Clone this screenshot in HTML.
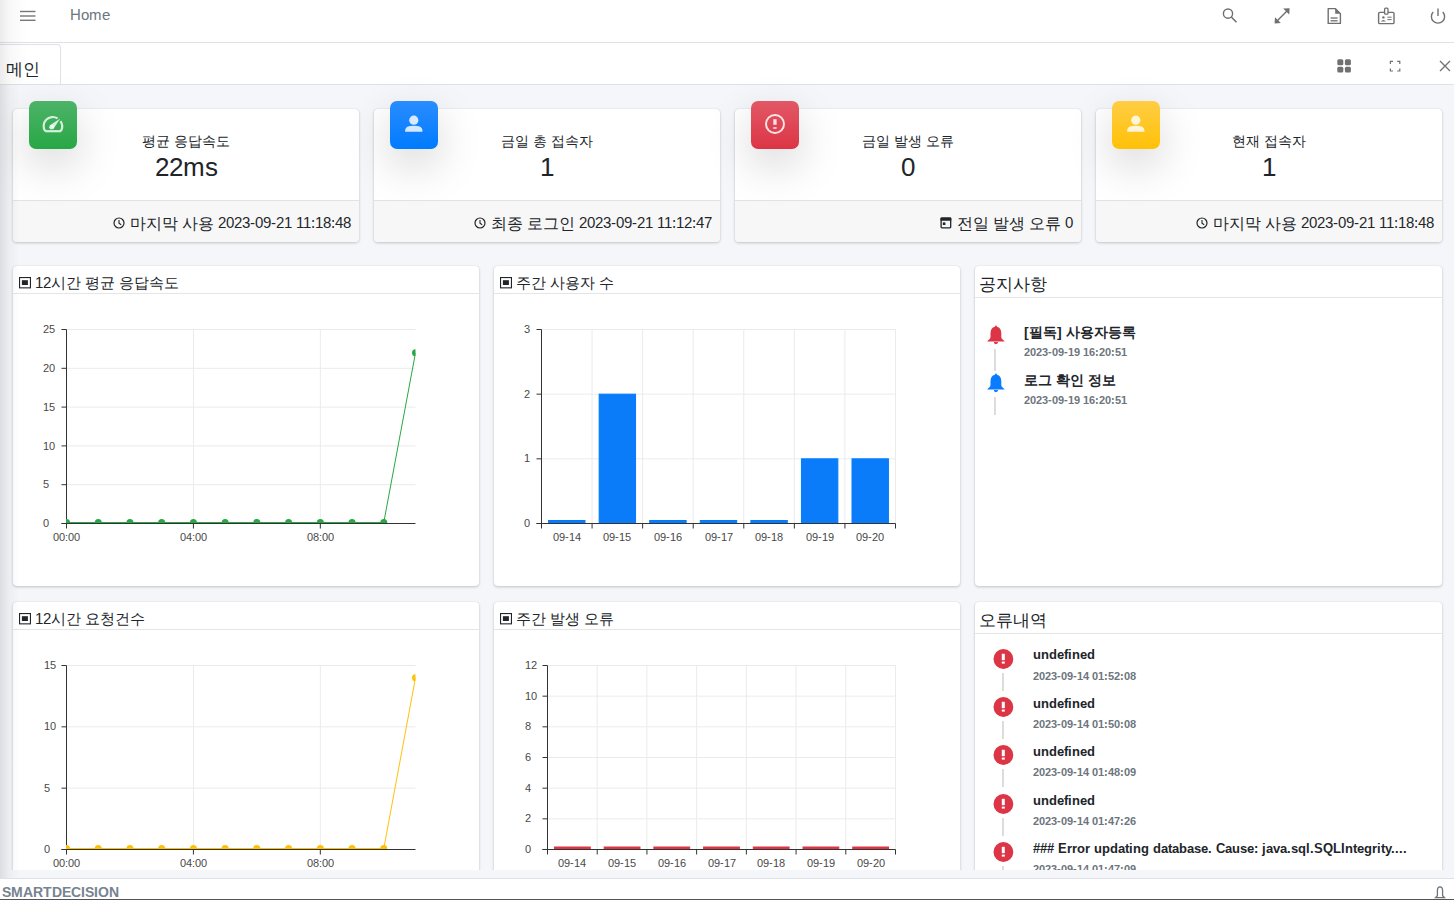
<!DOCTYPE html>
<html><head><meta charset="utf-8"><title>Home</title>
<style>
@font-face{font-family:"Liberation Sans";src:local("Liberation Sans"),local("LiberationSans"),local("Liberation Sans Regular"),local("LiberationSans-Regular");font-weight:400}
@font-face{font-family:"Liberation Sans";src:local("Liberation Sans Bold"),local("LiberationSans-Bold");font-weight:700}
@font-face{font-family:"Liberation Sans";src:local("Liberation Sans"),local("LiberationSans"),local("Liberation Sans Regular"),local("LiberationSans-Regular");size-adjust:133.3%;unicode-range:U+1100-11FF,U+3130-318F,U+AC00-D7AF;font-weight:400}
@font-face{font-family:"Liberation Sans";src:local("Liberation Sans Bold"),local("LiberationSans-Bold");size-adjust:133.3%;unicode-range:U+1100-11FF,U+3130-318F,U+AC00-D7AF;font-weight:700}
*{box-sizing:border-box;margin:0;padding:0}
html,body{width:1454px;height:900px;overflow:hidden}
body{background:#f4f6f9;font-family:"Liberation Sans",sans-serif;color:#212529;position:relative;line-height:1.149}
.a{position:absolute}
.hdr{left:0;top:0;width:1454px;height:43px;background:#fff;border-bottom:1px solid #dee2e6}
.tabs{left:0;top:43px;width:1454px;height:42px;background:#fff;border-bottom:1px solid #dee2e6}
.card{background:#fff;border-radius:4px;box-shadow:0 0 1px rgba(0,0,0,.125),0 1px 3px rgba(0,0,0,.2)}
.ib{border-radius:7px;box-shadow:0 16px 44px rgba(0,0,0,.17)}
.ttl{font-size:14px;color:#212529;text-align:center;white-space:nowrap}
.num{font-size:25px;color:#212529;text-align:center;white-space:nowrap}
.ft{background:#f7f7f7;border-top:1px solid #e3e3e3;border-radius:0 0 4px 4px}
.ftx{font-size:14px;color:#212529;white-space:nowrap;text-align:right}
.ph{border-bottom:1px solid #e5e5e5}
.pt{font-size:15px;color:#212529;white-space:nowrap}
.nt{font-size:14px;color:#212529;white-space:nowrap;font-weight:bold}
.nd{font-size:11.4px;color:#6c757d;white-space:nowrap;font-weight:bold}
</style></head><body>

<div class="a hdr"></div>
<div class="a" style="left:0;top:0;width:26px;height:85px;background:linear-gradient(90deg,rgba(0,0,0,.08),rgba(0,0,0,.03) 35%,rgba(0,0,0,0));z-index:5;pointer-events:none"></div>
<div class="a" style="left:0;top:85px;width:20px;height:793px;background:linear-gradient(90deg,rgba(0,0,0,.1),rgba(0,0,0,.035) 45%,rgba(0,0,0,0));z-index:5;pointer-events:none"></div>
<svg class="a" style="left:20px;top:10px" width="16" height="12" viewBox="0 0 16 12"><rect x="0" y="0.8" width="15.5" height="1.4" fill="#777"/><rect x="0" y="5.3" width="15.5" height="1.4" fill="#777"/><rect x="0" y="9.6" width="15.5" height="1.4" fill="#777"/></svg>
<div class="a" style="left:70px;top:5.5px;font-size:15px;color:#6c757d">Home</div>
<svg class="a" style="left:1220px;top:6px" width="20" height="20" viewBox="0 0 20 20"><circle cx="8" cy="7.6" r="4.6" fill="none" stroke="#707070" stroke-width="1.4"/><line x1="11.3" y1="11" x2="16.5" y2="16.2" stroke="#707070" stroke-width="1.6"/></svg>
<svg class="a" style="left:1272px;top:6px" width="20" height="20" viewBox="0 0 20 20"><line x1="5" y1="15" x2="15" y2="5" stroke="#707070" stroke-width="1.5"/><path d="M2.6 17.4 L3 11.2 L8.8 17 Z" fill="#707070"/><path d="M17.6 2.2 L17.2 8.6 L11.2 2.6 Z" fill="#707070"/></svg>
<svg class="a" style="left:1324px;top:6px" width="20" height="20" viewBox="0 0 20 20"><path d="M4.2 2.6 H11.2 L16.4 7.8 V17.4 H4.2 Z" fill="none" stroke="#707070" stroke-width="1.4" stroke-linejoin="round"/><path d="M11.2 2.6 L16.4 7.8 H11.2 Z" fill="#707070"/><line x1="6.6" y1="12" x2="13.6" y2="12" stroke="#707070" stroke-width="1.3"/><line x1="6.6" y1="14.8" x2="13.6" y2="14.8" stroke="#707070" stroke-width="1.3"/></svg>
<svg class="a" style="left:1376px;top:6px" width="20" height="20" viewBox="0 0 20 20"><rect x="2.6" y="6.4" width="15.4" height="11.2" rx="1.2" fill="none" stroke="#707070" stroke-width="1.4"/><rect x="8.6" y="2.2" width="3.4" height="6" rx="1" fill="#fff" stroke="#707070" stroke-width="1.3"/><circle cx="7.4" cy="11.4" r="1.2" fill="#707070"/><path d="M4.8 15.6 Q7.4 12.6 10 15.6 Z" fill="#707070"/><line x1="11.4" y1="11.2" x2="15.6" y2="11.2" stroke="#707070" stroke-width="1"/><line x1="11.4" y1="13.6" x2="15.6" y2="13.6" stroke="#707070" stroke-width="1"/></svg>
<svg class="a" style="left:1428px;top:6px" width="20" height="20" viewBox="0 0 20 20"><path d="M5.2 6 A6.6 6.6 0 1 0 14.8 6" fill="none" stroke="#707070" stroke-width="1.4"/><line x1="10" y1="2.6" x2="10" y2="10" stroke="#707070" stroke-width="1.4"/></svg>
<div class="a tabs"></div>
<div class="a" style="left:-1px;top:44px;width:62px;height:40px;background:#fff;border:1px solid #dee2e6;border-bottom:none;border-radius:0 4px 0 0"></div>
<div class="a" style="left:6px;top:60px;font-size:17px;color:#212529">메인</div>
<svg class="a" style="left:1334px;top:56px" width="20" height="20" viewBox="0 0 20 20"><rect x="3.3" y="3.3" width="6" height="5.9" rx="1.5" fill="#707070"/><rect x="10.9" y="3.3" width="6" height="5.9" rx="1.5" fill="#707070"/><rect x="3.3" y="10.7" width="6" height="5.9" rx="1.5" fill="#707070"/><rect x="10.9" y="10.7" width="6" height="5.9" rx="1.5" fill="#707070"/></svg>
<svg class="a" style="left:1385px;top:56px" width="20" height="20" viewBox="0 0 20 20"><path d="M5.4 8 V5.4 H8 M12.2 5.4 H14.8 V8 M14.8 12.4 V15 H12.2 M8 15 H5.4 V12.4" fill="none" stroke="#707070" stroke-width="1.2"/></svg>
<svg class="a" style="left:1435px;top:56px" width="20" height="20" viewBox="0 0 20 20"><path d="M5 5 L15 15 M15 5 L5 15" stroke="#707070" stroke-width="1.3"/></svg>
<div class="a card" style="left:13px;top:109px;width:346px;height:133px"></div>
<div class="a ft" style="left:13px;top:200px;width:346px;height:42px"></div>
<div class="a ib" style="left:29px;top:101px;width:48px;height:48px;background:linear-gradient(180deg,#4db368,#28a745)"></div>
<svg class="a" style="left:29px;top:101px" width="48" height="48" viewBox="0 0 48 48"><path d="M16.2 30.2 A9.1 9.1 0 0 1 28.6 17.4 M31.4 20.1 A9.1 9.1 0 0 1 31.8 30.2" fill="none" stroke="rgba(255,255,255,.8)" stroke-width="2.2" stroke-linejoin="round"/><line x1="16.2" y1="30.2" x2="31.8" y2="30.2" stroke="rgba(255,255,255,.8)" stroke-width="2.2"/><path d="M20.6 24.4 L31.2 17.4 L24.4 28 Z" fill="rgba(255,255,255,.8)"/><circle cx="22.5" cy="26.2" r="2.3" fill="rgba(255,255,255,.8)"/></svg>
<div class="a ttl" style="left:13px;top:132.5px;width:346px;font-size:14px">평균 응답속도</div>
<div class="a num" style="left:13px;top:153px;width:346px;font-size:26px">22ms</div>
<div class="a ftx" style="left:13px;top:213px;width:338px;display:flex;justify-content:flex-end;align-items:center;height:20px"><svg width="12" height="12" viewBox="0 0 12 12" style="display:block"><circle cx="6" cy="6" r="5" fill="none" stroke="#212529" stroke-width="1.2"/><path d="M6 3 V6.2 L8.2 7.8" fill="none" stroke="#212529" stroke-width="1.1"/></svg><span style="font-size:16px;margin-left:5px;position:relative;top:1.5px">마지막 사용</span><span style="margin-left:4.5px;font-size:14.5px">2023-09-21 11:18:48</span></div>
<div class="a card" style="left:374px;top:109px;width:346px;height:133px"></div>
<div class="a ft" style="left:374px;top:200px;width:346px;height:42px"></div>
<div class="a ib" style="left:390px;top:101px;width:48px;height:48px;background:linear-gradient(180deg,#2a8cff,#007bff)"></div>
<svg class="a" style="left:390px;top:101px" width="48" height="48" viewBox="0 0 48 48"><circle cx="23.8" cy="19.2" r="4.6" fill="rgba(255,255,255,.82)"/><path d="M15.2 30.8 V29.2 Q15.2 24.8 23.8 24.8 Q32.4 24.8 32.4 29.2 V30.8 Z" fill="rgba(255,255,255,.82)"/></svg>
<div class="a ttl" style="left:374px;top:132.5px;width:346px;font-size:14px">금일 총 접속자</div>
<div class="a num" style="left:374px;top:153px;width:346px;font-size:26px">1</div>
<div class="a ftx" style="left:374px;top:213px;width:338px;display:flex;justify-content:flex-end;align-items:center;height:20px"><svg width="12" height="12" viewBox="0 0 12 12" style="display:block"><circle cx="6" cy="6" r="5" fill="none" stroke="#212529" stroke-width="1.2"/><path d="M6 3 V6.2 L8.2 7.8" fill="none" stroke="#212529" stroke-width="1.1"/></svg><span style="font-size:16px;margin-left:5px;position:relative;top:1.5px">최종 로그인</span><span style="margin-left:4.5px;font-size:14.5px">2023-09-21 11:12:47</span></div>
<div class="a card" style="left:735px;top:109px;width:346px;height:133px"></div>
<div class="a ft" style="left:735px;top:200px;width:346px;height:42px"></div>
<div class="a ib" style="left:751px;top:101px;width:48px;height:48px;background:linear-gradient(180deg,#e25866,#dc3545)"></div>
<svg class="a" style="left:751px;top:101px" width="48" height="48" viewBox="0 0 48 48"><circle cx="24" cy="23" r="9" fill="none" stroke="rgba(255,255,255,.85)" stroke-width="2"/><rect x="22.3" y="18.2" width="3.3" height="5.6" fill="rgba(255,255,255,.85)"/><rect x="22.3" y="26.2" width="3.3" height="1.6" fill="rgba(255,255,255,.85)"/></svg>
<div class="a ttl" style="left:735px;top:132.5px;width:346px;font-size:14px">금일 발생 오류</div>
<div class="a num" style="left:735px;top:153px;width:346px;font-size:26px">0</div>
<div class="a ftx" style="left:735px;top:213px;width:338px;display:flex;justify-content:flex-end;align-items:center;height:20px"><svg width="12" height="12" viewBox="0 0 12 12" style="display:block"><rect x="1.1" y="1.2" width="9.6" height="9.6" rx="0.8" fill="none" stroke="#212529" stroke-width="1.3"/><rect x="0.5" y="0.6" width="10.8" height="3.2" rx="0.6" fill="#212529"/><rect x="2.8" y="5.4" width="2.6" height="2.6" fill="#212529"/></svg><span style="font-size:16px;margin-left:5px;position:relative;top:1.5px">전일 발생 오류</span><span style="margin-left:4.5px;font-size:14.5px">0</span></div>
<div class="a card" style="left:1096px;top:109px;width:346px;height:133px"></div>
<div class="a ft" style="left:1096px;top:200px;width:346px;height:42px"></div>
<div class="a ib" style="left:1112px;top:101px;width:48px;height:48px;background:linear-gradient(180deg,#ffcd45,#ffc107)"></div>
<svg class="a" style="left:1112px;top:101px" width="48" height="48" viewBox="0 0 48 48"><circle cx="23.8" cy="19.2" r="4.6" fill="rgba(255,255,255,.82)"/><path d="M15.2 30.8 V29.2 Q15.2 24.8 23.8 24.8 Q32.4 24.8 32.4 29.2 V30.8 Z" fill="rgba(255,255,255,.82)"/></svg>
<div class="a ttl" style="left:1096px;top:132.5px;width:346px;font-size:14px">현재 접속자</div>
<div class="a num" style="left:1096px;top:153px;width:346px;font-size:26px">1</div>
<div class="a ftx" style="left:1096px;top:213px;width:338px;display:flex;justify-content:flex-end;align-items:center;height:20px"><svg width="12" height="12" viewBox="0 0 12 12" style="display:block"><circle cx="6" cy="6" r="5" fill="none" stroke="#212529" stroke-width="1.2"/><path d="M6 3 V6.2 L8.2 7.8" fill="none" stroke="#212529" stroke-width="1.1"/></svg><span style="font-size:16px;margin-left:5px;position:relative;top:1.5px">마지막 사용</span><span style="margin-left:4.5px;font-size:14.5px">2023-09-21 11:18:48</span></div>
<div class="a" style="left:0;top:85px;width:1454px;height:785px;overflow:hidden">
<div class="a card" style="left:13px;top:181px;width:466px;height:320px"></div>
<div class="a ph" style="left:13px;top:181px;width:466px;height:28px"></div>
<svg class="a" style="left:19px;top:192px" width="13" height="12" viewBox="0 0 13 12"><rect x="0.55" y="0.55" width="10.9" height="10.3" fill="none" stroke="#212529" stroke-width="1.1"/><rect x="2.9" y="3.2" width="6" height="4.8" fill="#212529"/></svg>
<div class="a pt" style="left:35px;top:188.5px;font-size:15px">12시간 평균 응답속도</div>
<div class="a card" style="left:494px;top:181px;width:466px;height:320px"></div>
<div class="a ph" style="left:494px;top:181px;width:466px;height:28px"></div>
<svg class="a" style="left:500px;top:192px" width="13" height="12" viewBox="0 0 13 12"><rect x="0.55" y="0.55" width="10.9" height="10.3" fill="none" stroke="#212529" stroke-width="1.1"/><rect x="2.9" y="3.2" width="6" height="4.8" fill="#212529"/></svg>
<div class="a pt" style="left:516px;top:188.5px;font-size:15px">주간 사용자 수</div>
<div class="a card" style="left:975px;top:181px;width:467px;height:320px"></div>
<div class="a ph" style="left:975px;top:181px;width:467px;height:32px"></div>
<div class="a pt" style="left:979px;top:189.5px;font-size:16.5px">공지사항</div>
<div class="a card" style="left:13px;top:517px;width:466px;height:300px"></div>
<div class="a ph" style="left:13px;top:517px;width:466px;height:28px"></div>
<svg class="a" style="left:19px;top:528px" width="13" height="12" viewBox="0 0 13 12"><rect x="0.55" y="0.55" width="10.9" height="10.3" fill="none" stroke="#212529" stroke-width="1.1"/><rect x="2.9" y="3.2" width="6" height="4.8" fill="#212529"/></svg>
<div class="a pt" style="left:35px;top:524.5px;font-size:15px">12시간 요청건수</div>
<div class="a card" style="left:494px;top:517px;width:466px;height:300px"></div>
<div class="a ph" style="left:494px;top:517px;width:466px;height:28px"></div>
<svg class="a" style="left:500px;top:528px" width="13" height="12" viewBox="0 0 13 12"><rect x="0.55" y="0.55" width="10.9" height="10.3" fill="none" stroke="#212529" stroke-width="1.1"/><rect x="2.9" y="3.2" width="6" height="4.8" fill="#212529"/></svg>
<div class="a pt" style="left:516px;top:524.5px;font-size:15px">주간 발생 오류</div>
<div class="a card" style="left:975px;top:517px;width:467px;height:300px"></div>
<div class="a ph" style="left:975px;top:517px;width:467px;height:32px"></div>
<div class="a pt" style="left:979px;top:525.5px;font-size:16.5px">오류내역</div>
<svg class="a" style="left:0;top:-85px" width="1454" height="900" viewBox="0 0 1454 900">
<style>.tk{font-family:"Liberation Sans",sans-serif;font-size:11px;fill:#484848}</style>
<line x1="61.5" y1="523.5" x2="66.5" y2="523.5" stroke="#333" stroke-width="1"/>
<text x="43.4" y="527.1" class="tk">0</text>
<line x1="66.5" y1="484.7" x2="415.5" y2="484.7" stroke="#ebebeb" stroke-width="1"/>
<line x1="61.5" y1="484.7" x2="66.5" y2="484.7" stroke="#333" stroke-width="1"/>
<text x="43.4" y="488.3" class="tk">5</text>
<line x1="66.5" y1="445.9" x2="415.5" y2="445.9" stroke="#ebebeb" stroke-width="1"/>
<line x1="61.5" y1="445.9" x2="66.5" y2="445.9" stroke="#333" stroke-width="1"/>
<text x="43.4" y="449.5" class="tk">10</text>
<line x1="66.5" y1="407.1" x2="415.5" y2="407.1" stroke="#ebebeb" stroke-width="1"/>
<line x1="61.5" y1="407.1" x2="66.5" y2="407.1" stroke="#333" stroke-width="1"/>
<text x="43.4" y="410.7" class="tk">15</text>
<line x1="66.5" y1="368.3" x2="415.5" y2="368.3" stroke="#ebebeb" stroke-width="1"/>
<line x1="61.5" y1="368.3" x2="66.5" y2="368.3" stroke="#333" stroke-width="1"/>
<text x="43.4" y="371.9" class="tk">20</text>
<line x1="66.5" y1="329.5" x2="415.5" y2="329.5" stroke="#ebebeb" stroke-width="1"/>
<line x1="61.5" y1="329.5" x2="66.5" y2="329.5" stroke="#333" stroke-width="1"/>
<text x="43.4" y="333.1" class="tk">25</text>
<line x1="193.41" y1="329.5" x2="193.41" y2="528.5" stroke="#ebebeb" stroke-width="1"/>
<line x1="193.41" y1="523.5" x2="193.41" y2="528.5" stroke="#333" stroke-width="1"/>
<line x1="320.32" y1="329.5" x2="320.32" y2="528.5" stroke="#ebebeb" stroke-width="1"/>
<line x1="320.32" y1="523.5" x2="320.32" y2="528.5" stroke="#333" stroke-width="1"/>
<text x="66.5" y="541" text-anchor="middle" class="tk">00:00</text>
<text x="193.41" y="541" text-anchor="middle" class="tk">04:00</text>
<text x="320.32" y="541" text-anchor="middle" class="tk">08:00</text>
<line x1="66.5" y1="329.5" x2="66.5" y2="528.5" stroke="#333" stroke-width="1"/>
<line x1="61.5" y1="523.5" x2="415.5" y2="523.5" stroke="#333" stroke-width="1"/>
<clipPath id="c66329"><rect x="66" y="319.5" width="349.5" height="203.5"/></clipPath>
<g clip-path="url(#c66329)"><polyline points="66.5,522.5 98.23,522.5 129.95,522.5 161.68,522.5 193.41,522.5 225.14,522.5 256.86,522.5 288.59,522.5 320.32,522.5 352.05,522.5 383.77,522.5 415.5,352.78" fill="none" stroke="#28a745" stroke-width="1"/>
<circle cx="66.5" cy="522.5" r="3.5" fill="#28a745"/>
<circle cx="98.23" cy="522.5" r="3.5" fill="#28a745"/>
<circle cx="129.95" cy="522.5" r="3.5" fill="#28a745"/>
<circle cx="161.68" cy="522.5" r="3.5" fill="#28a745"/>
<circle cx="193.41" cy="522.5" r="3.5" fill="#28a745"/>
<circle cx="225.14" cy="522.5" r="3.5" fill="#28a745"/>
<circle cx="256.86" cy="522.5" r="3.5" fill="#28a745"/>
<circle cx="288.59" cy="522.5" r="3.5" fill="#28a745"/>
<circle cx="320.32" cy="522.5" r="3.5" fill="#28a745"/>
<circle cx="352.05" cy="522.5" r="3.5" fill="#28a745"/>
<circle cx="383.77" cy="522.5" r="3.5" fill="#28a745"/>
<circle cx="415.5" cy="352.78" r="3.5" fill="#28a745"/>
</g>
<line x1="536.5" y1="523.5" x2="541.5" y2="523.5" stroke="#333" stroke-width="1"/>
<text x="523.6" y="527.1" class="tk">0</text>
<line x1="541.5" y1="458.83" x2="895.5" y2="458.83" stroke="#ebebeb" stroke-width="1"/>
<line x1="536.5" y1="458.83" x2="541.5" y2="458.83" stroke="#333" stroke-width="1"/>
<text x="523.6" y="462.43" class="tk">1</text>
<line x1="541.5" y1="394.17" x2="895.5" y2="394.17" stroke="#ebebeb" stroke-width="1"/>
<line x1="536.5" y1="394.17" x2="541.5" y2="394.17" stroke="#333" stroke-width="1"/>
<text x="523.6" y="397.77" class="tk">2</text>
<line x1="541.5" y1="329.5" x2="895.5" y2="329.5" stroke="#ebebeb" stroke-width="1"/>
<line x1="536.5" y1="329.5" x2="541.5" y2="329.5" stroke="#333" stroke-width="1"/>
<text x="523.6" y="333.1" class="tk">3</text>
<line x1="592.07" y1="329.5" x2="592.07" y2="523.5" stroke="#ebebeb" stroke-width="1"/>
<line x1="592.07" y1="523.5" x2="592.07" y2="528.5" stroke="#333" stroke-width="1"/>
<line x1="642.64" y1="329.5" x2="642.64" y2="523.5" stroke="#ebebeb" stroke-width="1"/>
<line x1="642.64" y1="523.5" x2="642.64" y2="528.5" stroke="#333" stroke-width="1"/>
<line x1="693.21" y1="329.5" x2="693.21" y2="523.5" stroke="#ebebeb" stroke-width="1"/>
<line x1="693.21" y1="523.5" x2="693.21" y2="528.5" stroke="#333" stroke-width="1"/>
<line x1="743.79" y1="329.5" x2="743.79" y2="523.5" stroke="#ebebeb" stroke-width="1"/>
<line x1="743.79" y1="523.5" x2="743.79" y2="528.5" stroke="#333" stroke-width="1"/>
<line x1="794.36" y1="329.5" x2="794.36" y2="523.5" stroke="#ebebeb" stroke-width="1"/>
<line x1="794.36" y1="523.5" x2="794.36" y2="528.5" stroke="#333" stroke-width="1"/>
<line x1="844.93" y1="329.5" x2="844.93" y2="523.5" stroke="#ebebeb" stroke-width="1"/>
<line x1="844.93" y1="523.5" x2="844.93" y2="528.5" stroke="#333" stroke-width="1"/>
<line x1="895.5" y1="329.5" x2="895.5" y2="523.5" stroke="#ebebeb" stroke-width="1"/>
<line x1="895.5" y1="523.5" x2="895.5" y2="528.5" stroke="#333" stroke-width="1"/>
<rect x="548.58" y="520.5" width="36.41" height="3" fill="#0a7cfa" stroke="#007bff" stroke-width="1"/>
<text x="566.79" y="541" text-anchor="middle" class="tk">09-14</text>
<rect x="599.15" y="394.17" width="36.41" height="129.33" fill="#0a7cfa" stroke="#007bff" stroke-width="1"/>
<text x="617.36" y="541" text-anchor="middle" class="tk">09-15</text>
<rect x="649.72" y="520.5" width="36.41" height="3" fill="#0a7cfa" stroke="#007bff" stroke-width="1"/>
<text x="667.93" y="541" text-anchor="middle" class="tk">09-16</text>
<rect x="700.29" y="520.5" width="36.41" height="3" fill="#0a7cfa" stroke="#007bff" stroke-width="1"/>
<text x="718.5" y="541" text-anchor="middle" class="tk">09-17</text>
<rect x="750.87" y="520.5" width="36.41" height="3" fill="#0a7cfa" stroke="#007bff" stroke-width="1"/>
<text x="769.07" y="541" text-anchor="middle" class="tk">09-18</text>
<rect x="801.44" y="458.83" width="36.41" height="64.67" fill="#0a7cfa" stroke="#007bff" stroke-width="1"/>
<text x="819.64" y="541" text-anchor="middle" class="tk">09-19</text>
<rect x="852.01" y="458.83" width="36.41" height="64.67" fill="#0a7cfa" stroke="#007bff" stroke-width="1"/>
<text x="870.21" y="541" text-anchor="middle" class="tk">09-20</text>
<line x1="541.5" y1="329.5" x2="541.5" y2="528.5" stroke="#333" stroke-width="1"/>
<line x1="536.5" y1="523.5" x2="895.5" y2="523.5" stroke="#333" stroke-width="1"/>
<line x1="61.5" y1="849.5" x2="66.5" y2="849.5" stroke="#333" stroke-width="1"/>
<text x="43.6" y="853.1" class="tk">0</text>
<line x1="66.5" y1="788.17" x2="415.5" y2="788.17" stroke="#ebebeb" stroke-width="1"/>
<line x1="61.5" y1="788.17" x2="66.5" y2="788.17" stroke="#333" stroke-width="1"/>
<text x="43.6" y="791.77" class="tk">5</text>
<line x1="66.5" y1="726.83" x2="415.5" y2="726.83" stroke="#ebebeb" stroke-width="1"/>
<line x1="61.5" y1="726.83" x2="66.5" y2="726.83" stroke="#333" stroke-width="1"/>
<text x="43.6" y="730.43" class="tk">10</text>
<line x1="66.5" y1="665.5" x2="415.5" y2="665.5" stroke="#ebebeb" stroke-width="1"/>
<line x1="61.5" y1="665.5" x2="66.5" y2="665.5" stroke="#333" stroke-width="1"/>
<text x="43.6" y="669.1" class="tk">15</text>
<line x1="193.41" y1="665.5" x2="193.41" y2="854.5" stroke="#ebebeb" stroke-width="1"/>
<line x1="193.41" y1="849.5" x2="193.41" y2="854.5" stroke="#333" stroke-width="1"/>
<line x1="320.32" y1="665.5" x2="320.32" y2="854.5" stroke="#ebebeb" stroke-width="1"/>
<line x1="320.32" y1="849.5" x2="320.32" y2="854.5" stroke="#333" stroke-width="1"/>
<text x="66.5" y="867" text-anchor="middle" class="tk">00:00</text>
<text x="193.41" y="867" text-anchor="middle" class="tk">04:00</text>
<text x="320.32" y="867" text-anchor="middle" class="tk">08:00</text>
<line x1="66.5" y1="665.5" x2="66.5" y2="854.5" stroke="#333" stroke-width="1"/>
<line x1="61.5" y1="849.5" x2="415.5" y2="849.5" stroke="#333" stroke-width="1"/>
<clipPath id="c66665"><rect x="66" y="655.5" width="349.5" height="193.5"/></clipPath>
<g clip-path="url(#c66665)"><polyline points="66.5,848.5 98.23,848.5 129.95,848.5 161.68,848.5 193.41,848.5 225.14,848.5 256.86,848.5 288.59,848.5 320.32,848.5 352.05,848.5 383.77,848.5 415.5,677.77" fill="none" stroke="#ffc107" stroke-width="1"/>
<circle cx="66.5" cy="848.5" r="3.5" fill="#ffc107"/>
<circle cx="98.23" cy="848.5" r="3.5" fill="#ffc107"/>
<circle cx="129.95" cy="848.5" r="3.5" fill="#ffc107"/>
<circle cx="161.68" cy="848.5" r="3.5" fill="#ffc107"/>
<circle cx="193.41" cy="848.5" r="3.5" fill="#ffc107"/>
<circle cx="225.14" cy="848.5" r="3.5" fill="#ffc107"/>
<circle cx="256.86" cy="848.5" r="3.5" fill="#ffc107"/>
<circle cx="288.59" cy="848.5" r="3.5" fill="#ffc107"/>
<circle cx="320.32" cy="848.5" r="3.5" fill="#ffc107"/>
<circle cx="352.05" cy="848.5" r="3.5" fill="#ffc107"/>
<circle cx="383.77" cy="848.5" r="3.5" fill="#ffc107"/>
<circle cx="415.5" cy="677.77" r="3.5" fill="#ffc107"/>
</g>
<line x1="542.5" y1="849.5" x2="547.5" y2="849.5" stroke="#333" stroke-width="1"/>
<text x="524.6" y="853.1" class="tk">0</text>
<line x1="547.5" y1="818.83" x2="895.5" y2="818.83" stroke="#ebebeb" stroke-width="1"/>
<line x1="542.5" y1="818.83" x2="547.5" y2="818.83" stroke="#333" stroke-width="1"/>
<text x="524.6" y="822.43" class="tk">2</text>
<line x1="547.5" y1="788.17" x2="895.5" y2="788.17" stroke="#ebebeb" stroke-width="1"/>
<line x1="542.5" y1="788.17" x2="547.5" y2="788.17" stroke="#333" stroke-width="1"/>
<text x="524.6" y="791.77" class="tk">4</text>
<line x1="547.5" y1="757.5" x2="895.5" y2="757.5" stroke="#ebebeb" stroke-width="1"/>
<line x1="542.5" y1="757.5" x2="547.5" y2="757.5" stroke="#333" stroke-width="1"/>
<text x="524.6" y="761.1" class="tk">6</text>
<line x1="547.5" y1="726.83" x2="895.5" y2="726.83" stroke="#ebebeb" stroke-width="1"/>
<line x1="542.5" y1="726.83" x2="547.5" y2="726.83" stroke="#333" stroke-width="1"/>
<text x="524.6" y="730.43" class="tk">8</text>
<line x1="547.5" y1="696.17" x2="895.5" y2="696.17" stroke="#ebebeb" stroke-width="1"/>
<line x1="542.5" y1="696.17" x2="547.5" y2="696.17" stroke="#333" stroke-width="1"/>
<text x="524.6" y="699.77" class="tk">10</text>
<line x1="547.5" y1="665.5" x2="895.5" y2="665.5" stroke="#ebebeb" stroke-width="1"/>
<line x1="542.5" y1="665.5" x2="547.5" y2="665.5" stroke="#333" stroke-width="1"/>
<text x="524.6" y="669.1" class="tk">12</text>
<line x1="597.21" y1="665.5" x2="597.21" y2="849.5" stroke="#ebebeb" stroke-width="1"/>
<line x1="597.21" y1="849.5" x2="597.21" y2="854.5" stroke="#333" stroke-width="1"/>
<line x1="646.93" y1="665.5" x2="646.93" y2="849.5" stroke="#ebebeb" stroke-width="1"/>
<line x1="646.93" y1="849.5" x2="646.93" y2="854.5" stroke="#333" stroke-width="1"/>
<line x1="696.64" y1="665.5" x2="696.64" y2="849.5" stroke="#ebebeb" stroke-width="1"/>
<line x1="696.64" y1="849.5" x2="696.64" y2="854.5" stroke="#333" stroke-width="1"/>
<line x1="746.36" y1="665.5" x2="746.36" y2="849.5" stroke="#ebebeb" stroke-width="1"/>
<line x1="746.36" y1="849.5" x2="746.36" y2="854.5" stroke="#333" stroke-width="1"/>
<line x1="796.07" y1="665.5" x2="796.07" y2="849.5" stroke="#ebebeb" stroke-width="1"/>
<line x1="796.07" y1="849.5" x2="796.07" y2="854.5" stroke="#333" stroke-width="1"/>
<line x1="845.79" y1="665.5" x2="845.79" y2="849.5" stroke="#ebebeb" stroke-width="1"/>
<line x1="845.79" y1="849.5" x2="845.79" y2="854.5" stroke="#333" stroke-width="1"/>
<line x1="895.5" y1="665.5" x2="895.5" y2="849.5" stroke="#ebebeb" stroke-width="1"/>
<line x1="895.5" y1="849.5" x2="895.5" y2="854.5" stroke="#333" stroke-width="1"/>
<rect x="554.46" y="847" width="35.79" height="2.5" fill="#dc3545" stroke="#dc3545" stroke-width="1"/>
<text x="572.36" y="867" text-anchor="middle" class="tk">09-14</text>
<rect x="604.17" y="847" width="35.79" height="2.5" fill="#dc3545" stroke="#dc3545" stroke-width="1"/>
<text x="622.07" y="867" text-anchor="middle" class="tk">09-15</text>
<rect x="653.89" y="847" width="35.79" height="2.5" fill="#dc3545" stroke="#dc3545" stroke-width="1"/>
<text x="671.79" y="867" text-anchor="middle" class="tk">09-16</text>
<rect x="703.6" y="847" width="35.79" height="2.5" fill="#dc3545" stroke="#dc3545" stroke-width="1"/>
<text x="721.5" y="867" text-anchor="middle" class="tk">09-17</text>
<rect x="753.32" y="847" width="35.79" height="2.5" fill="#dc3545" stroke="#dc3545" stroke-width="1"/>
<text x="771.21" y="867" text-anchor="middle" class="tk">09-18</text>
<rect x="803.03" y="847" width="35.79" height="2.5" fill="#dc3545" stroke="#dc3545" stroke-width="1"/>
<text x="820.93" y="867" text-anchor="middle" class="tk">09-19</text>
<rect x="852.75" y="847" width="35.79" height="2.5" fill="#dc3545" stroke="#dc3545" stroke-width="1"/>
<text x="870.64" y="867" text-anchor="middle" class="tk">09-20</text>
<line x1="547.5" y1="665.5" x2="547.5" y2="854.5" stroke="#333" stroke-width="1"/>
<line x1="542.5" y1="849.5" x2="895.5" y2="849.5" stroke="#333" stroke-width="1"/>
</svg>
<svg class="a" style="left:986.5px;top:240px" width="18" height="21" viewBox="0 0 18 21"><path d="M8.9 0.5 Q9.9 0.5 9.9 1.8 C13 2.4 14.3 5 14.3 8.5 V12 C14.3 13.6 15.7 14.8 17.3 15.8 V16.5 H0.5 V15.8 C2.1 14.8 3.5 13.6 3.5 12 V8.5 C3.5 5 4.8 2.4 7.9 1.8 Q7.9 0.5 8.9 0.5 Z" fill="#dc3545"/><path d="M6.8 17.1 H11 A2.1 2.1 0 0 1 6.8 17.1 Z" fill="#dc3545"/></svg>
<div class="a" style="left:994.3px;top:264px;width:1.8px;height:22px;background:#dddddd"></div>
<div class="a nt" style="left:1024px;top:238.5px">[필독] 사용자등록</div>
<div class="a nd" style="left:1024px;top:261px">2023-09-19 16:20:51</div>
<svg class="a" style="left:986.5px;top:288px" width="18" height="21" viewBox="0 0 18 21"><path d="M8.9 0.5 Q9.9 0.5 9.9 1.8 C13 2.4 14.3 5 14.3 8.5 V12 C14.3 13.6 15.7 14.8 17.3 15.8 V16.5 H0.5 V15.8 C2.1 14.8 3.5 13.6 3.5 12 V8.5 C3.5 5 4.8 2.4 7.9 1.8 Q7.9 0.5 8.9 0.5 Z" fill="#0a7cff"/><path d="M6.8 17.1 H11 A2.1 2.1 0 0 1 6.8 17.1 Z" fill="#0a7cff"/></svg>
<div class="a" style="left:994.3px;top:312px;width:1.8px;height:18px;background:#dddddd"></div>
<div class="a nt" style="left:1024px;top:286.5px">로그 확인 정보</div>
<div class="a nd" style="left:1024px;top:309px">2023-09-19 16:20:51</div>
<svg class="a" style="left:993px;top:564.0px" width="21" height="21" viewBox="0 0 21 21"><circle cx="10.4" cy="10" r="9.9" fill="#dc3545"/><rect x="8.8" y="4.8" width="3" height="6.4" fill="#fff"/><rect x="8.8" y="12.6" width="3" height="2" fill="#fff"/></svg>
<div class="a" style="left:1002px;top:588.0px;width:1.8px;height:18px;background:#dcdcdc"></div>
<div class="a nt" style="left:1033px;top:563.2px;font-size:13px">undefined</div>
<div class="a nd" style="left:1033px;top:585.0px">2023-09-14 01:52:08</div>
<svg class="a" style="left:993px;top:612.2px" width="21" height="21" viewBox="0 0 21 21"><circle cx="10.4" cy="10" r="9.9" fill="#dc3545"/><rect x="8.8" y="4.8" width="3" height="6.4" fill="#fff"/><rect x="8.8" y="12.6" width="3" height="2" fill="#fff"/></svg>
<div class="a" style="left:1002px;top:636.2px;width:1.8px;height:18px;background:#dcdcdc"></div>
<div class="a nt" style="left:1033px;top:611.7px;font-size:13px">undefined</div>
<div class="a nd" style="left:1033px;top:633.2px">2023-09-14 01:50:08</div>
<svg class="a" style="left:993px;top:660.4px" width="21" height="21" viewBox="0 0 21 21"><circle cx="10.4" cy="10" r="9.9" fill="#dc3545"/><rect x="8.8" y="4.8" width="3" height="6.4" fill="#fff"/><rect x="8.8" y="12.6" width="3" height="2" fill="#fff"/></svg>
<div class="a" style="left:1002px;top:684.4px;width:1.8px;height:18px;background:#dcdcdc"></div>
<div class="a nt" style="left:1033px;top:660.2px;font-size:13px">undefined</div>
<div class="a nd" style="left:1033px;top:681.4px">2023-09-14 01:48:09</div>
<svg class="a" style="left:993px;top:708.6px" width="21" height="21" viewBox="0 0 21 21"><circle cx="10.4" cy="10" r="9.9" fill="#dc3545"/><rect x="8.8" y="4.8" width="3" height="6.4" fill="#fff"/><rect x="8.8" y="12.6" width="3" height="2" fill="#fff"/></svg>
<div class="a" style="left:1002px;top:732.6px;width:1.8px;height:18px;background:#dcdcdc"></div>
<div class="a nt" style="left:1033px;top:708.7px;font-size:13px">undefined</div>
<div class="a nd" style="left:1033px;top:729.6px">2023-09-14 01:47:26</div>
<svg class="a" style="left:993px;top:756.8px" width="21" height="21" viewBox="0 0 21 21"><circle cx="10.4" cy="10" r="9.9" fill="#dc3545"/><rect x="8.8" y="4.8" width="3" height="6.4" fill="#fff"/><rect x="8.8" y="12.6" width="3" height="2" fill="#fff"/></svg>
<div class="a" style="left:1002px;top:780.8px;width:1.8px;height:18px;background:#dcdcdc"></div>
<div class="a nt" style="left:1033px;top:757.2px;font-size:13px">### Error updating database. Cause: java.sql.SQLIntegrity....</div>
<div class="a nd" style="left:1033px;top:777.8px">2023-09-14 01:47:09</div>
</div>
<div class="a" style="left:0;top:878px;width:1454px;height:22px;background:#fff;border-top:1px solid #dee2e6"></div>
<div class="a" style="left:2px;top:884px;font-size:14px;font-weight:bold;color:#77838f">SMARTDECISION</div>
<svg class="a" style="left:1433px;top:885px" width="14" height="14" viewBox="0 0 14 14"><path d="M2.6 12.6 L4.4 10.8 V5.6 Q4.4 2 7 1.8 Q9.6 2 9.6 5.6 V10.8 L11.4 12.6 Z" fill="none" stroke="#6c757d" stroke-width="1.3"/></svg>
<div class="a" style="left:0;top:899px;width:1454px;height:1px;background:#555"></div>
</body></html>
